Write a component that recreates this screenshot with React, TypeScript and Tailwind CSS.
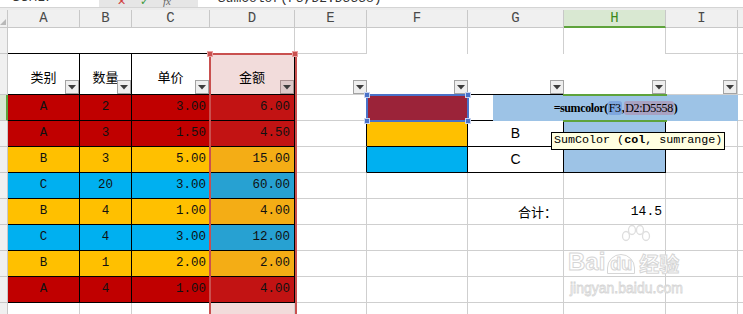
import React from "react";
import clsx from "clsx";

const mono = "font-['Liberation_Mono',monospace]";
const cjk = "font-['Noto_Sans_CJK_SC','Noto_Sans',sans-serif]";
const grid = "border-[#cfcfcf]";

const RED = "bg-[#c00000]";
const YEL = "bg-[#ffc000]";
const BLU = "bg-[#00b0f0]";
const tint: Record<string, string> = {
  A: "bg-[#c21313]",
  B: "bg-[#f4ad15]",
  C: "bg-[#27a1d2]",
};
const base: Record<string, string> = { A: RED, B: YEL, C: BLU };

const rows: [string, number, string, string][] = [
  ["A", 2, "3.00", "6.00"],
  ["A", 3, "1.50", "4.50"],
  ["B", 3, "5.00", "15.00"],
  ["C", 20, "3.00", "60.00"],
  ["B", 4, "1.00", "4.00"],
  ["C", 4, "3.00", "12.00"],
  ["B", 1, "2.00", "2.00"],
  ["A", 4, "1.00", "4.00"],
];

const FilterBtn = ({ pink }: { pink?: boolean }) => (
  <span
    className={clsx(
      "absolute right-0 bottom-0 w-[14px] h-[14px] border flex items-center justify-center",
      pink ? "bg-[#dcc8c8] border-[#a89090]" : "bg-[#eeeeee] border-[#a3a3a3]"
    )}
  >
    <svg width="8" height="5" viewBox="0 0 8 5">
      <path d="M0 0h8L4 4.5z" fill="#3c3c3c" />
    </svg>
  </span>
);

const RowHead = ({ active }: { active?: boolean }) => (
  <div
    className={clsx(
      "border-b border-[#c8c8c8]",
      active ? "bg-[#d8e7d1] border-r-2 border-r-[#5ea33b]" : "bg-[#f0f0f0] border-r"
    )}
  />
);

const Cell = ({
  className,
  children,
}: {
  className?: string;
  children?: React.ReactNode;
}) => <div className={clsx("relative", className)}>{children}</div>;

export default function App() {
  const cols = ["A", "B", "C", "D", "E", "F", "G", "H", "I"];

  return (
    <div className="w-[743px] h-[314px] overflow-hidden bg-white relative select-none">
      {/* formula bar (cut off at top) */}
      <div className="flex h-[7px] overflow-hidden bg-[#e6e6e6]">
        <div className={clsx("w-[99px] bg-white pl-[12px] text-[14px] leading-none text-[#333] -mt-[10px]", mono)}>
          SUMIF
        </div>
        <div className="w-[99px] flex items-start gap-[14px] pl-[18px] -mt-[7px] text-[11px]">
          <span className="text-[#d04040]">✕</span>
          <span className="text-[#3c9a3c]">✓</span>
          <span className="italic text-[#666] font-['Liberation_Serif',serif]">fx</span>
        </div>
        <div className={clsx("flex-1 bg-white pl-[12px] text-[13px] leading-none text-[#333] -mt-[8px]", mono)}>
          =SumColor(F3,D2:D5558)
        </div>
      </div>
      <div className="h-[3px] bg-[#ececec] border-t border-[#d4d4d4]" />

      <div className="relative grid grid-cols-[8px_72px_52px_78px_85px_72px_101px_96px_102px_72px_1fr] grid-rows-[18px_26px_41px_repeat(9,26px)]">
        {/* column headers */}
        <div className="bg-[#f0f0f0] border-r border-b border-[#c8c8c8] relative">
          <svg className="absolute right-[1px] bottom-[2px]" width="6" height="6" viewBox="0 0 6 6">
            <path d="M6 0v6H0z" fill="#b8b8b8" />
          </svg>
        </div>
        {cols.map((c) => (
          <div
            key={c}
            className={clsx(
              "flex items-center justify-center text-[14px] border-r",
              mono,
              c === "H"
                ? "bg-[#d9e8d2] text-[#3b8a1c] border-b-2 border-b-[#5ea33b] border-r-[#c8c8c8]"
                : "bg-[#f0f0f0] text-[#4a4a4a] border-b border-[#c8c8c8]"
            )}
          >
            {c}
          </div>
        ))}
        <div className="bg-[#f0f0f0] border-b border-[#c8c8c8]" />

        {/* row 1 */}
        <RowHead />
        <Cell className="col-span-4 border-b border-b-black border-r border-r-[#cfcfcf]" />
        <Cell className={clsx("border-r border-b", grid)} />
        <Cell className={clsx("border-r", grid)} />
        <Cell className={clsx("border-r", grid)} />
        <Cell className={clsx("border-r", grid)} />
        <Cell className={clsx("border-r border-b", grid)} />
        <Cell className={clsx("border-b", grid)} />

        {/* row 2 : headers */}
        <RowHead />
        {["类别", "数量", "单价", "金额"].map((t, i) => (
          <Cell
            key={t}
            className={clsx(
              "border-r border-b border-black flex items-center justify-center pt-[6px] text-[13px] text-black",
              cjk,
              i === 3 ? "bg-[#f2dcdb]" : "bg-white"
            )}
          >
            {t}
            <FilterBtn pink={i === 3} />
          </Cell>
        ))}
        <Cell className={clsx("border-b", grid)}>
          <FilterBtn />
        </Cell>
        <Cell className="border-b border-black">
          <FilterBtn />
        </Cell>
        <Cell className="border-b border-black">
          <FilterBtn />
        </Cell>
        <Cell className="border-b border-black">
          <FilterBtn />
        </Cell>
        <Cell className={clsx("border-r border-b", grid)}>
          <FilterBtn />
        </Cell>
        <Cell className={clsx("border-b", grid)} />

        {/* data rows */}
        {rows.map(([k, q, p, amt], i) => {
          const r = i + 3;
          const inBox = r >= 3 && r <= 5;
          const fFill = r === 3 ? "bg-[#9b2339]" : r === 4 ? YEL : r === 5 ? BLU : "";
          const dataText = clsx("border-r border-b border-black text-[12.5px] text-[#111] flex items-center", mono);
          return (
            <React.Fragment key={r}>
              <RowHead active={r === 3} />
              <Cell className={clsx(dataText, base[k], "justify-center")}>{k}</Cell>
              <Cell className={clsx(dataText, base[k], "justify-center")}>{q}</Cell>
              <Cell className={clsx(dataText, base[k], "justify-end pr-[3px]")}>{p}</Cell>
              <Cell className={clsx(dataText, tint[k], "justify-end pr-[4px]")}>{amt}</Cell>
              <Cell
                className={clsx(
                  "border-b",
                  grid,
                  inBox ? "border-r border-r-black" : "border-r"
                )}
              />
              <Cell className={clsx(inBox ? "border-r border-b border-black" : clsx("border-r border-b", grid), fFill)} />
              <Cell
                className={clsx(
                  inBox ? "border-r border-b border-black" : clsx("border-r border-b", grid),
                  "flex items-center justify-center text-[14px] text-black font-['Liberation_Sans',sans-serif]",
                  r === 7 && "justify-end pr-[6px]"
                )}
              >
                {r === 4 ? "B" : r === 5 ? "C" : r === 7 ? <span className={clsx("text-[13px]", cjk)}>合计：</span> : null}
              </Cell>
              <Cell
                className={clsx(
                  inBox ? "border-r border-b border-black bg-[#9dc3e6]" : clsx("border-r border-b", grid),
                  "flex items-center justify-end pr-[3px] text-[13px] text-black",
                  mono
                )}
              >
                {r === 7 ? "14.5" : null}
              </Cell>
              <Cell className={clsx("border-r border-b", grid)} />
              <Cell className={clsx("border-b", grid)} />
            </React.Fragment>
          );
        })}

        {/* row 11 */}
        <RowHead />
        <Cell className={clsx("border-r border-b", grid)} />
        <Cell className={clsx("border-r border-b", grid)} />
        <Cell className={clsx("border-r border-b", grid)} />
        <Cell className={clsx("border-r border-b bg-[#f2dcdb]", grid)} />
        <Cell className={clsx("border-r border-b", grid)} />
        <Cell className={clsx("border-r border-b", grid)} />
        <Cell className={clsx("border-r border-b", grid)} />
        <Cell className={clsx("border-r border-b", grid)} />
        <Cell className={clsx("border-r border-b", grid)} />
        <Cell className={clsx("border-b", grid)} />

        {/* column D selection outline */}
        <div className="absolute left-[209px] top-[43px] w-[88px] h-[300px] border-2 border-[#c9504f] border-b-0 pointer-events-none" />
        <div className="absolute left-[207px] top-[41px] w-[6px] h-[6px] bg-[#c9504f] border border-[#e8a0a0]" />
        <div className="absolute left-[292px] top-[41px] w-[6px] h-[6px] bg-[#c9504f] border border-[#e8a0a0]" />

        {/* in-cell editor for H3 */}
        <div className="absolute left-[493px] top-[85px] w-[245px] h-[26px] bg-[#9dc3e6] flex items-center justify-center">
          <span className="font-['Liberation_Serif',serif] font-bold text-[12px] text-black tracking-[-0.4px]">
            =sumcolor(
            <span className="bg-[#7ea6de] rounded-[3px] font-normal px-[1px]">F3</span>,
            <span className="bg-[#a8a2c2] rounded-[3px] font-normal px-[1px]">D2:D5558</span>)
          </span>
        </div>
        <div className="absolute left-[563px] top-[84px] w-[104px] h-[2px] bg-[#5ea33b]" />
        <div className="absolute left-[563px] top-[110px] w-[104px] h-[2px] bg-[#5ea33b]" />

        {/* F3 reference outline */}
        <div className="absolute left-[366px] top-[84px] w-[103px] h-[28px] border-2 border-[#4a72c8]" />
        {[
          [364, 82],
          [465, 82],
          [364, 108],
          [465, 108],
        ].map(([x, y], i) => (
          <div
            key={i}
            className="absolute w-[6px] h-[6px] bg-[#4a72c8] border border-[#c8d4f0]"
            style={{ left: x, top: y }}
          />
        ))}

        {/* function tooltip */}
        <div
          className={clsx(
            "absolute left-[551px] top-[122px] h-[18px] px-[2px] bg-[#ffffe1] border border-black flex items-center text-[11.7px] text-black leading-none",
            mono
          )}
        >
          SumColor (<b>col</b>, sumrange)
        </div>

        {/* watermark */}
        <div className="absolute left-[566px] top-[213px] w-[140px] h-[85px] pointer-events-none">
          <svg className="absolute left-[54px] top-[2px]" width="32" height="24" viewBox="0 0 32 24" fill="none" stroke="#dedede" strokeWidth="1.3">
            <ellipse cx="6" cy="11" rx="3.5" ry="4.5" />
            <ellipse cx="12" cy="5" rx="3.5" ry="4.5" />
            <ellipse cx="20" cy="5" rx="3.5" ry="4.5" />
            <ellipse cx="26" cy="11" rx="3.5" ry="4.5" />
          </svg>
          <div className="absolute left-[2px] top-[27px] flex items-end text-[24px] font-bold leading-none font-['Liberation_Sans',sans-serif] text-white [-webkit-text-stroke:1px_#d6d6d6]">
            <span>Bai</span>
            <span className="ml-[2px] text-[18px] px-[2px] rounded-t-full border border-[#d6d6d6]">du</span>
            <span className={clsx("ml-[4px] text-[20px]", cjk)}>经验</span>
          </div>
          <div className="absolute left-[4px] top-[58px] text-[14px] leading-none font-['Liberation_Sans',sans-serif] text-white [-webkit-text-stroke:0.8px_#d6d6d6]">
            jingyan.baidu.com
          </div>
        </div>
      </div>
    </div>
  );
}
